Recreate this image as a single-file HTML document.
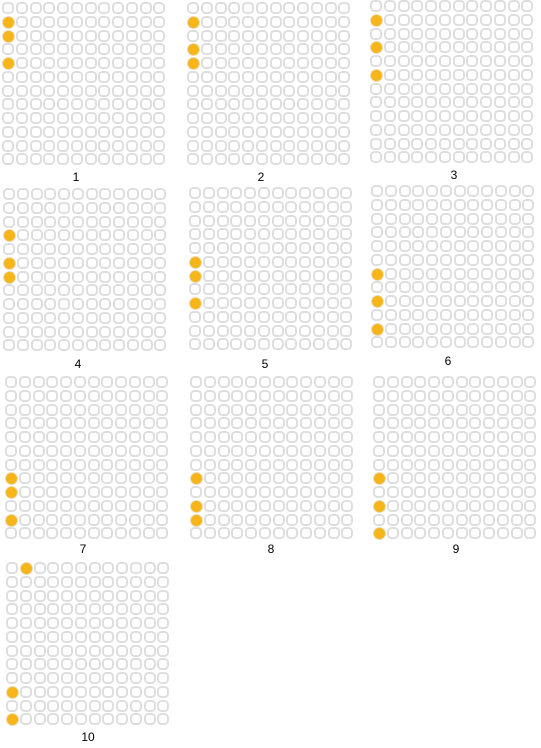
<!DOCTYPE html>
<html><head><meta charset="utf-8"><style>
body{margin:0;width:541px;height:748px;background:#fff;position:relative;overflow:hidden;font-family:"Liberation Sans",sans-serif}
.c{position:absolute;width:8px;height:8px;border:2.6px solid #dedede;border-radius:4.5px;background:#fff}
.o{background:#f6b519;border-color:#e9dcc0;border-radius:50%;border-width:1px;width:11.2px;height:11.2px}
.l{position:absolute;font-size:12px;color:#000;transform:translateX(-50%)}
</style></head><body>
<div class="l" style="left:76px;top:170px">1</div>
<div class="l" style="left:261px;top:170px">2</div>
<div class="l" style="left:454px;top:168px">3</div>
<div class="l" style="left:78px;top:357px">4</div>
<div class="l" style="left:265px;top:357px">5</div>
<div class="l" style="left:448px;top:354px">6</div>
<div class="l" style="left:83px;top:542px">7</div>
<div class="l" style="left:271px;top:542px">8</div>
<div class="l" style="left:456px;top:542px">9</div>
<div class="l" style="left:88px;top:730px">10</div>
<script>
var P=[[2,2,[[1,0],[2,0],[4,0]]],[187,2,[[1,0],[3,0],[4,0]]],[370,0,[[1,0],[3,0],[5,0]]],
[3,188,[[3,0],[5,0],[6,0]]],[189,187,[[5,0],[6,0],[8,0]]],[371,185,[[6,0],[8,0],[10,0]]],
[5,376,[[7,0],[8,0],[10,0]]],[190,376,[[7,0],[9,0],[10,0]]],[373,376,[[7,0],[9,0],[11,0]]],
[6,562,[[0,1],[9,0],[11,0]]]];
var h='',s=13.75;
P.forEach(function(p){for(var r=0;r<12;r++)for(var c=0;c<12;c++){var o=p[2].some(function(q){return q[0]==r&&q[1]==c});
h+='<div class="c'+(o?' o':'')+'" style="left:'+(p[0]+c*s).toFixed(1)+'px;top:'+(p[1]+r*s).toFixed(1)+'px"></div>';}});
document.body.insertAdjacentHTML('beforeend',h);
</script>
</body></html>
